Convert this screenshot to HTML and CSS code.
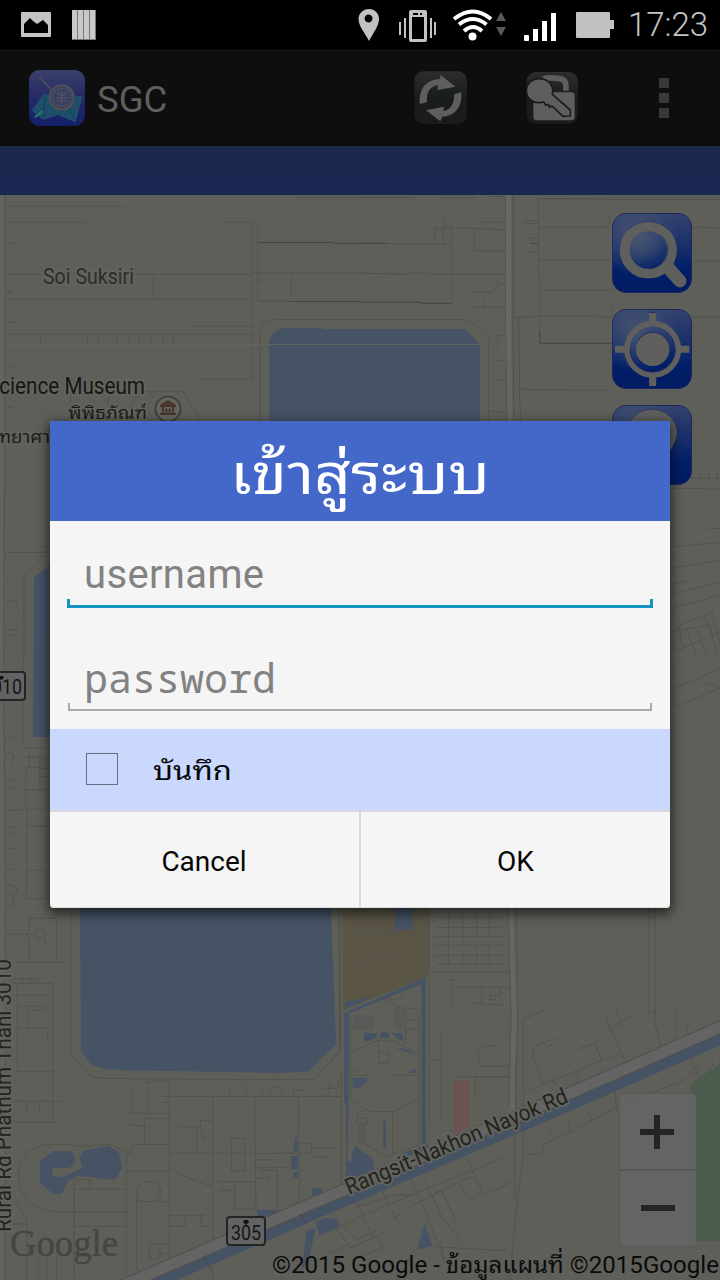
FILE: index.html
```html
<!DOCTYPE html>
<html lang="th">
<head>
<meta charset="utf-8">
<title>SGC</title>
<link rel="stylesheet" href="styles.css">
</head>
<body>
<div class="screen">
  <header class="status">
    <svg class="status-left" width="110" height="50" viewBox="0 0 110 50">
      <path fill="#c4c4c4" fill-rule="evenodd" d="M22 12h28q1 0 1 1v23q0 1-1 1H22q-1 0-1-1V13q0-1 1-1zM24 24l4-4 2-2 3 3 4 3 3-2 3-2 5 5v8H24z"/>
      <path fill="#777" d="M72 10h24v30H72z"/>
      <path fill="#c8c8c8" d="M72 10h5v29h-5zM78 10h5v29h-5zM84 10h5v29h-5zM90 10h5v29h-5z"/>
    </svg>
    <svg class="status-right" width="264" height="50" viewBox="356 0 264 50">
      <path fill="#c2c2c2" fill-rule="evenodd" d="M369 9c6 0 10 4.500 10 10 0 7-6 14-10 22-4-8-10.500-15-10.500-22 0-5.500 4.500-10 10.500-10zm-.500 5.500a4 4 0 1 0 .1 0z"/>
      <path fill="#c2c2c2" fill-rule="evenodd" d="M411 10h14q2 0 2 2v28q0 2-2 2h-14q-2 0-2-2V12q0-2 2-2zM412 17h12v22h-12zM413 13v2h5v-2zM420 13v2h2v-2z"/>
      <path stroke="#c2c2c2" stroke-width="2" d="M400 22v13M405 18v20M431 18v20M435 22v13"/>
      <g fill="none" stroke="#fff" stroke-width="4"><path d="M454 19q19-15 37 0"/><path d="M459 24.500q14-11 27.500 0"/><path d="M464 31q9-8 18 0"/></g>
      <circle cx="472.500" cy="36.500" r="4" fill="#fff"/>
      <path fill="#5a5a5a" d="M501 12l5 9h-10zM496 27h10l-5 9z"/>
      <path fill="#fff" d="M525 35h3q1 0 1 1v4q0 1-1 1h-3q-1 0-1-1v-4q0-1 1-1zM533 29h5v12h-5zM542 21h5v20h-5zM551 13h5v28h-5z"/>
      <path fill="#c2c2c2" d="M577 12h32q1 0 1 1v7h4v9h-4v8q0 1-1 1h-32q-1 0-1-1V13q0-1 1-1z"/>
    </svg>
    <span class="clock">17:23</span>
  </header>

  <div class="actionbar">
    <svg class="logo" width="56" height="56" viewBox="0 0 168 168">
      <defs><linearGradient id="lg" x2="0" y2="1"><stop offset="0" stop-color="#3b406c"/><stop offset=".45" stop-color="#262b68"/><stop offset="1" stop-color="#14206a"/></linearGradient></defs>
      <rect width="168" height="168" rx="32" fill="url(#lg)"/>
      <path fill="#1d5068" stroke="#2b6070" stroke-width="2" d="M10 121L45 73l40 14 74-8-21 76-50-22-45 15z"/>
      <path fill="none" stroke="#183c64" stroke-width="3" d="M48 76l-4 70M92 130l20-28 25 44M14 141l28-24"/>
      <path stroke="#23707a" stroke-width="8" d="M18 142l22-18"/>
      <path stroke="#4c4a55" stroke-width="6" d="M32 21l34 37"/>
      <path stroke="#3d4960" stroke-width="4" d="M123 100l24 21"/>
      <circle cx="98" cy="82" r="36" fill="#393f61" stroke="#514f56" stroke-width="7"/>
      <circle cx="98" cy="82" r="27" fill="none" stroke="#555663" stroke-width="4" stroke-dasharray="5 3"/>
      <path fill="none" stroke="#505263" stroke-width="4" d="M85 68l10 10M111 68l-10 10M82 84h32M84 93h29M98 62v38"/>
    </svg>
    <h1 class="app">SGC</h1>
    <svg class="act refresh" width="54" height="54" viewBox="0 0 162 162">
      <defs><linearGradient id="dg" x2="0" y2="1"><stop offset="0" stop-color="#2c2e2e"/><stop offset=".5" stop-color="#191c1c"/><stop offset="1" stop-color="#1b1b1b"/></linearGradient></defs>
      <rect x="1" y="1" width="158" height="158" rx="28" fill="url(#dg)"/>
      <path fill="#5e5e5e" d="M18 99C12 51 41 25 78 24L80 12 124 47 70 57 73 43C48 46 36 63 39 93z"/>
      <path fill="#5e5e5e" d="M142 63C146 109 121 136 85 137L79 151 36 118 90 107 88 121C112 114 121 97 121 70z"/>
    </svg>
    <svg class="act key" width="54" height="54" viewBox="0 0 162 162">
      <rect x="2" y="3" width="154" height="155" rx="28" fill="url(#dg)"/>
      <path fill="none" stroke="#5e5e5e" stroke-width="17" d="M52 23q18-4 45-1 23 2 23 24v13"/>
      <path fill="#5e5e5e" d="M22 64h114q10 0 10 10v64q0 10-10 10H32q-10 0-10-10z"/>
      <path fill="#5e5e5e" stroke="#191b1b" stroke-width="5" stroke-linejoin="round" d="M45 24a36 36 0 0 1 34 46l54 47v18l-22 1-33-31-7 4-4-9-8 3-5-10-8 1A36 36 0 1 1 45 24z"/>
    </svg>
    <span class="more"><i></i><i></i><i></i></span>
  </div>
  <div class="strip"></div>

  <main class="map">
    <svg class="canvas" width="720" height="1085" viewBox="0 195 720 1085">
      <rect y="195" width="720" height="1085" fill="#5e5f59"/>
      <path fill="#626263" d="M0 195h5v230q-2 210 1 425-3 100-1 430H0z"/>
      <path fill="none" stroke="#52524e" stroke-width="1" d="M5 195v230q-2 210 0 425 1 100 0 430"/>
      <path fill="#5b5546" d="M342 900h87v76l-86 34z"/>
      <path fill="#4b5b4d" d="M720 1064l-29 19v158h29z"/>
      <path fill="#6b5351" d="M454 1081h16v45l-16 9z"/>

      <g transform="translate(0 190) scale(.33333)" class="roads">
        <path d="M17 49h355M17 97h238M663 97h94v470M17 161h20l6-4h17M17 253h740M17 328h740M460 253v75M20 309l18-12M20 309h20M17 397h33M573 409h184M14 433h743M122 433v29M263 433v24M295 433v26M350 433v26M386 433v23M418 433v28M452 433v26M490 433v29M520 433v27M14 493h14M14 530h32M606 568h151M17 652h21M773 108v226M758 249h297l160 4M773 274h22M874 249v61l-4 9M773 334h97M890 15l9 8h340M780 693V432q0-40 40-43h380M390 650l30-46h128l50 82v10M430 640l28-36M440 650l30-46M212 605v60M325 605v40"/>
      </g>
      <g transform="translate(360 190) scale(.33333)" class="roads">
        <path d="M0 22h162l7-7M242 15v9h102V15M390 19h45M253 72v37h22M354 97h80M0 160h78M78 160l100 3h97M224 163v-48h110l100 4M250 115v48M275 115v225M343 119v62l52 2h40M0 250h210l2 3h222M339 307h59l17-21v-21M415 283h19M339 352h95M373 352v-22M0 389h320l20 10 46 46v248M413 473v-37h21M406 509l28 3M411 569l25 3M386 664l52 3M497 78v14h38M486 100h49M504 145h31M502 187h33M535 15v237l4 7v176M537 26l300 2h243M537 112h500l43 2M537 211h220M996 214h84M537 301h220M458 382l62-1 0-2h196l2 3h362M475 382l3 130v86l132 1 2 2h133M478 600l4 90M757 335v25M748 78v22l-10 7"/>
        <path class="dark" d="M0 336l185 1v3h90M539 425v33l5 2h214M0 160h78M510 160h24"/>
      </g>
      <path fill="none" stroke="#464641" d="M258 242.500h75l2 1h25M290 301.500h70"/>
      <g fill="#455365">
        <path d="M269 344q2-13 13-16h40l2 1h142l14 16v80H269zM34 577l16-12v172H33z"/>
      </g>
      <path stroke="#5e665f" d="M0 344.500h482"/>
      <g transform="translate(0 540) scale(.33333)" class="roads">
        <path d="M110 0v22h30V0M13 37h137M150 50h-25l-53 55v245l-4 60v206l8 9h74M18 112h15M18 184h32l3 24M14 270h40M14 285h26M14 305h20M13 592h20l18-14M17 640q40-10 15 30M66 652h58M88 640v40M120 640v108M120 660h30M120 685h30M120 710h30M78 682h42M78 682l-1 126M78 750h72M14 813l60-5h76M82 808l-3 268h71M82 858h68M80 991h70M14 712l32 10M14 740l32 4M14 862h30M14 880h30M14 925h32M14 988h25M14 1033q45 0 35 25M20 1058q20-2 20 20v18H14"/>
      </g>
      <g transform="translate(660 420) scale(.33333)" class="roads">
        <path d="M90 175h90M122 152v23M147 152v23M172 152v23M30 205h108l2 3h40M144 325h36M30 382l40-5 110-10M30 446l150-25M30 494l62-14M30 524l150-38M30 566l150-40M30 640l40-30 80-30M30 635l120-20 20 90M55 605l15 90M80 625l30 85M110 630l30 75M134 585l22 60M155 575l25 100M30 700l150-65M30 812l150-67M30 868l150-65M140 792q30-8 28 14M30 728l35-18"/>
      </g>
      <g fill="none" stroke="#51514d"><path d="M506 195v130l1 100M513 195v125l1 105"/></g>
      <path fill="none" stroke="#666" stroke-width="5" d="M508.500 195v125l1.500 105V900l4 120-2 55v45"/>

      <g transform="translate(0 900) scale(.33333)" class="roads">
        <path d="M100 40v15M16 103h90M87 187v-70l-10-13 10-14V55h82v132M50 187h140M110 88h23v27h-23zM136 115v25M35 236h80v14M70 236v10M90 236v12M35 250h123v416M35 286h106M52 255v260M52 319h79v12H83M83 319v66M52 385h91v32M52 514h108M40 604h142M40 667h140M80 604v36M118 604v36M212 0v450q0 25 30 45 25 40 60 40l300 3h340l75-80q4-100-2-458M425 552l25-8h58v620M445 548v90M397 563v75M376 640h132M486 589h540M486 607h22M638 589v560M764 589l4 340M895 589l4 360M1024 520v410M382 673l70 7M433 730v-74h75M379 1140V760h15l5-27h109M379 814h129M508 760h430M694 715h40v98h-40zM532 680h70v-18h35M602 680l7 38h14M590 680v75M510 805q90 50 128 52M768 802h100M768 780h54M768 834h40l-30-24h54v120M655 845h110M704 845v80M704 927h64M660 870h37l-24 10M895 730h40v35l10 7h48M940 743h67M720 550l20 20v17M690 555v32M787 565v22M810 585q0-25 15-24 15-1 22 24M880 587v-17h35M895 555v15M973 565h40v-18h11M988 552v36M222 838h48v30M222 868h157M222 838v300M222 937h157M222 979h157M410 890q0-46 38-46 34 0 34 32 0 29-40 29-32 0-32-15zM410 890v220l40 28M410 905h98M508 946h106M556 946v32h-48M603 946v32h24M448 1075v-43h60M448 1075h32v-43M480 1060h30"/>
        <path d="M379 755l-48-22-76 6-70-6h-45q-82 15-84 90 2 80 66 102l45 12h215M45 905l36 53v180M13 972h65M115 1070v70M140 1070v70M170 1070v70"/>
      </g>
      <g transform="translate(330 900) scale(.33333)" class="roads">
        <path d="M32 10v440l-30 30M70 20v80M70 85h112M182 20v217M70 100h230M113 100v96H45M113 178h68M298 20v650M316 52h200M316 82h200M314 110h205M316 136h206M316 166h200M322 192h200M356 25v166M398 25v110M398 150v42M440 25v85M440 135v58M478 25v85M478 135v58M300 217h120l3-2h115M350 240h34M365 240v83M365 262h172M455 262v52h62M480 286h16v14h-16zM510 262v25h-12M424 310h30M530 355h12M533 397h8M334 400v255M300 481h34M500 438h-40q-30 20-7 60h87M378 530h160M436 530v54M437 530h103M575 570h-8M580 760V360l70-36M640 550l-32-80 5-30 65-28M580 577l68-27M648 550l162-67 68-26M740 448l55-18 20 50M650 440l20-8M890 488l-48-96-14-44M878 385l-23-62M825 395l83-50M740 517l8 30M670 540l10 20M955 20v315h25M975 20v350l20 80M955 55h20M1037 320v95h-18M1072 380v30M0 590h33"/>
        <path d="M535 20l8 335-7 265M558 20l6 335-5 145v130M580 760l-20 160-22 230M555 700v200M580 763h40q20 0 22-30l86-40 130-70q10-8 35-17l180-70M670 710l-14-30M720 695l-6-30M790 660l-20-28M860 635l-4-60M680 620l12 22M1082 480l28 60M1086 513a11 11 0 1 0 22 0 11 11 0 1 0-22 0M1145 480l5 20"/>
        <path d="M0 1000l100-55 60-25 370-150M0 940l80 80 70-35M80 905l50 110M156 875l58 110M240 830l45 100 60 160M285 840l50 110 65 80M20 985l40 60 110-50M180 960l40-20M240 920l60-30 100-50 30-10M335 870l50 110M400 750l60 135 88-40M60 1045l80-35 20 30-60 28M310 1040l220 12M345 1090l-15-70M0 1060l60-30M200 1140l50-80M260 1050l30-12M70 925l120-40h60l30-15M312 880l20-10M388 850l30 50 30-20"/>
        <path d="M62 345v255l60 35h70l75-38M64 458l80-38 48 5 72 35M145 420v70h30v-32h-30M64 526h55M180 526h87M188 637v130M267 345v390l-100 35-85-55M160 296h62M165 300l60 26h30l12 24M226 326v108M226 360h40M226 388h40M80 655q0-25 30-22M80 655h32v15H80z"/>
      </g>

      <g fill="#455365" transform="translate(0 900) scale(.33333)">
        <path d="M240 10h752l16 422-84 83-100 4-180-4-280-4-40-4-50-11-31-43z"/>
        <path d="M119 784l42-31h50q20 15 10 38-6 14-26 13h-35q-10 8 2 24l26 4 60-28-10-30 10-20 76-17 32 18 10 48-15 30-12 6-104-12-32 17-18 38h-26l-38-34z"/>
        <path d="M890 695l-12 60h16zM874 768h20v40h-20zM882 816h12v18h-14zM936 864h30v22h-30zM772 930h60v12l-58 26zM948 966l30-12 36 4 4 22-60 27zM920 990l26-4-22 108-18 10z"/>
      </g>
      <g fill="#595958"><path d="M353 1015h21v15h-21zM395 1006h9v24h-9zM357 1124h8v20h-8z"/></g>
      <g fill="#455365" transform="translate(330 900) scale(.33333)">
        <path fill-rule="evenodd" d="M42 340l246-110v500l-14 12V252L57 340l-1 250-4 195h10l12-48 55 40 4 60-85 30V615l-6-10zM45 305l85-15-85 38zM195 10h54v80h-54zM102 398l38 2v14l-38 14zM183 400h35v26zM148 413q0-18 16-18 14 0 14 18zM68 534h42v14l-30 20-12-10zM195 443q40 2 64 20l-18-4zM75 514l10-7v8zM236 518l20-12 2 14zM160 662h8v90l-9-10zM215 760l80-28v20l-80 20zM285 970l22 68-46 11zM0 957q20 0 28 18l-28 18z"/>
      </g>
      <g fill="none">
        <path stroke="#455365" stroke-width="11" d="M140 1290L207 1261 333 1206 573 1104 725 1037"/>
        <path stroke="#50504c" stroke-width="13" d="M110 1291L330 1196 573 1092 725 1025"/>
        <path stroke="#646465" stroke-width="11" d="M110 1291L330 1196 573 1092 725 1025"/>
        <path stroke="#46443d" d="M300 1214l6 10M203 1256l8 14"/>
      </g>

      <g class="label">
        <text x="43" y="283.500" font-size="22.500" textLength="91" lengthAdjust="spacingAndGlyphs" fill="#2c2c28">Soi Suksiri</text>
        <text x="-13" y="394" font-size="23" textLength="158" lengthAdjust="spacingAndGlyphs" fill="#161616">Science Museum</text>
        <text x="68" y="419" font-size="18" textLength="79" lengthAdjust="spacingAndGlyphs" fill="#1b1b1b">พิพิธภัณฑ์</text>
        <text x="-10" y="443" font-size="18" textLength="60" lengthAdjust="spacingAndGlyphs" fill="#1b1b1b">วิทยาศา</text>
        <text transform="translate(11 1232) rotate(-90)" font-size="22" textLength="273" lengthAdjust="spacingAndGlyphs" fill="#232320">Rural Rd Phathum Thani 3010</text>
        <text transform="translate(349 1195) rotate(-22.900)" font-size="22.500" textLength="239" lengthAdjust="spacingAndGlyphs" fill="#232320">Rangsit-Nakhon Nayok Rd</text>
      </g>
      <circle cx="168" cy="409" r="12.500" fill="#656560" stroke="#41413f" stroke-width="2"/>
      <path fill="#48352b" fill-rule="evenodd" d="M160 405l8-5 8 5v2h-2v6h2v2h-16v-2h2v-6h-2zM164 407v6h8v-6z"/>
      <path fill="none" stroke="#48352b" stroke-width="1.300" d="M166 413v-4l2 2 2-2v4"/>
      <g class="shield">
        <rect x="-14" y="672" width="39" height="28" rx="3"/><text x="-8" y="694" textLength="30" lengthAdjust="spacingAndGlyphs">010</text>
        <rect x="227" y="1217" width="38" height="28" rx="3"/><text x="231" y="1240" textLength="30" lengthAdjust="spacingAndGlyphs">305</text>
        <path d="M-1 676h4l1 2-3 2-3-2zM244 1220h4l1 2-3 3-3-3z" fill="#111"/>
      </g>
      <text class="google" x="10" y="1256" textLength="108" lengthAdjust="spacingAndGlyphs">Google</text>
      <text class="copy" x="272" y="1273" textLength="447" lengthAdjust="spacingAndGlyphs">©2015 Google - ข้อมูลแผนที่ ©2015Google</text>
    </svg>

    <nav class="tools">
      <svg width="80" height="80" viewBox="0 0 240 240">
        <defs>
          <linearGradient id="bg" x2="0" y2="1"><stop offset="0" stop-color="#35426c"/><stop offset=".4" stop-color="#19306a"/><stop offset=".72" stop-color="#001e68"/><stop offset="1" stop-color="#001c62"/></linearGradient>
          <radialGradient id="gl" cx=".3" cy=".25" r=".55"><stop offset="0" stop-color="#465370"/><stop offset="1" stop-color="#3c4d70" stop-opacity="0"/></radialGradient>
        </defs>
        <rect class="tile" x="1.500" y="1.500" width="237" height="237" rx="40"/><rect class="gloss" x="2" y="2" width="236" height="236" rx="40"/>
        <path stroke="#5f605d" stroke-width="39" stroke-linecap="round" d="M170 166l34 38"/>
        <circle cx="109" cy="111" r="71" fill="url(#gl)" stroke="#5f605d" stroke-width="29"/>
        <path fill="none" stroke="#202b68" stroke-width="2" d="M48 50q28-25 61-25t61 25M145 66a56 56 0 0 1-35 101"/>
      </svg>
      <svg width="80" height="80" viewBox="0 0 240 240">
        <rect class="tile" x="1.500" y="1.500" width="237" height="237" rx="40"/><rect class="gloss" x="2" y="2" width="236" height="236" rx="40"/>
        <path stroke="#5f605d" stroke-width="21" d="M122 10v34M122 198v33M9 121h34M200 121h32"/>
        <circle cx="122" cy="121" r="77" fill="none" stroke="#5f605d" stroke-width="17"/>
        <circle cx="122" cy="121" r="50" fill="#5f605d"/>
        <path fill="none" stroke="#202b68" stroke-width="3" d="M111 10h21M54 121a68 68 0 0 0 136 0M78 95a51 51 0 0 1 88 0"/>
      </svg>
      <svg width="80" height="80" viewBox="0 0 240 240">
        <rect class="tile" x="1.500" y="1.500" width="237" height="237" rx="40"/><rect class="gloss" x="2" y="2" width="236" height="236" rx="40"/>
        <path fill="#5f605d" stroke="#202b68" stroke-width="2" d="M120 13c40 0 75 30 75 67 0 50-45 75-75 145-30-70-75-95-75-145 0-37 35-67 75-67z"/>
      </svg>
    </nav>
    <div class="zoom"><span class="plus"></span><span class="minus"></span></div>
  </main>

  <section class="dialog">
    <h2 class="title"><svg width="620" height="100"><text x="180" y="73" textLength="260" lengthAdjust="spacingAndGlyphs">เข้าสู่ระบบ</text></svg></h2>
    <div class="fields">
      <div class="field focus">username</div>
      <div class="field pass">password</div>
    </div>
    <div class="remember"><span class="box"></span><svg width="90" height="60"><text x="1" y="40" textLength="79" lengthAdjust="spacingAndGlyphs">บันทึก</text></svg></div>
    <div class="buttons"><div class="btn"><span class="cancel">Cancel</span></div><div class="btn ok"><span>OK</span></div></div>
  </section>
</div>
</body>
</html>
```
FILE: styles.css
```css
* { box-sizing: border-box; }
body { margin: 0; background: #000; font-family: Roboto, "Droid Sans Thai", "Noto Sans Thai Looped", Loma, "Noto Sans", sans-serif; }
svg { display: block; flex: none; }
.screen { position: relative; width: 720px; height: 1280px; overflow: hidden; display: flex; flex-direction: column; }
.status { height: 50px; flex: none; display: flex; background: #000; }
.status-left { margin-right: 246px; }
.clock { margin-left: 8px; width: 84px; font-size: 33px; line-height: 50px; font-weight: 300; color: #c4c4c4; white-space: nowrap; }
.actionbar { height: 96px; flex: none; display: flex; align-items: center; background: #0e0e0e; border-top: 1px solid #191919; border-bottom: 2px solid #0a0a0a; padding-left: 29px; }
.app { margin: 5px 0 0 12px; width: 317px; font-size: 36.500px; font-weight: 400; line-height: 44px; color: #5f5f5f; }
.key { margin-left: 58px; }
.more { margin-left: 79px; display: flex; flex-direction: column; gap: 5px; }
.more i { width: 10px; height: 10px; background: #393939; }
.strip { height: 49px; flex: none; background: linear-gradient(#1a284a, #1b2952 60%); }
.map { position: relative; height: 1085px; flex: none; }
.roads { fill: none; stroke: #53534e; stroke-width: 3; }
.roads .dark { stroke: #444540; }
.label text { paint-order: stroke; stroke: #62635d; stroke-width: 4px; stroke-linejoin: round; }
.shield rect { fill: #636363; stroke: #242424; stroke-width: 2; }
.shield text { font-size: 20px; fill: #151515; }
.google { font-family: "Liberation Serif", serif; font-size: 38px; fill: #454642; stroke: #454642; stroke-width: .5px; }
.copy { font-size: 23.500px; fill: #0b0b0b; }
.tools { position: absolute; left: 612px; top: 18px; display: flex; flex-direction: column; gap: 16px; }
.tile { fill: url(#bg); stroke: #1d2460; stroke-width: 3; }
.gloss { fill: url(#gl); }
.zoom { position: absolute; left: 620px; top: 899px; width: 76px; height: 152px; border-radius: 3px; background: rgba(101, 101, 101, .9); box-shadow: 0 0 2px #51514d; display: flex; flex-direction: column; }
.zoom span { flex: 1; display: flex; }
.plus { border-bottom: 2px solid #575757; background: linear-gradient(#242424, #242424) 20px 35px / 34px 6px no-repeat, linear-gradient(#242424, #242424) 34px 21px / 6px 34px no-repeat; }
.minus { background: linear-gradient(#242424, #242424) 21px 34px / 34px 6px no-repeat; }
.dialog { position: absolute; left: 50px; top: 421px; width: 620px; height: 487px; display: flex; flex-direction: column; background: #f5f5f5; border-radius: 0 0 4px 4px; box-shadow: 0 4px 12px 2px rgba(0, 0, 0, .6); }
.title { margin: 0; height: 100px; flex: none; background: #4468c9; }
.title text { font-size: 56px; font-weight: 400; fill: #fff; }
.fields { height: 208px; flex: none; padding: 30px 17px 0; }
.field { position: relative; height: 57px; padding-left: 17px; line-height: 48px; font-size: 40px; letter-spacing: .35px; color: #828282; border-bottom: 3px solid #1197bf; }
.field::before, .field::after { content: ""; position: absolute; bottom: 0; width: 3px; height: 6px; background: #1197bf; }
.field::before { left: 0; }
.field::after { right: 0; }
.pass { margin: 48px 1px 0; height: 55px; padding-left: 16px; line-height: 44px; letter-spacing: 0; font-family: "Noto Sans Mono", "DejaVu Sans Mono", monospace; border-bottom: 2px solid #a9a9a9; }
.pass::before, .pass::after { width: 2px; background: #a9a9a9; }
.remember { height: 83px; flex: none; display: flex; align-items: center; background: #cad8fe; border-bottom: 2px solid #d8d9de; padding-left: 36px; }
.box { width: 32px; height: 32px; border: 1.500px solid #686f83; margin: -1px 34px 0 0; }
.remember text { font-size: 27px; fill: #080808; }
.buttons { flex: 1; display: flex; border-bottom: 1px solid #dce0dc; border-radius: 0 0 4px 4px; }
.btn { flex: 1; display: flex; align-items: center; justify-content: center; font-size: 28px; color: #060606; padding-top: 4px; }
.cancel { padding-right: 1px; }
.btn.ok { border-left: 2px solid #d9d9d9; }
```
